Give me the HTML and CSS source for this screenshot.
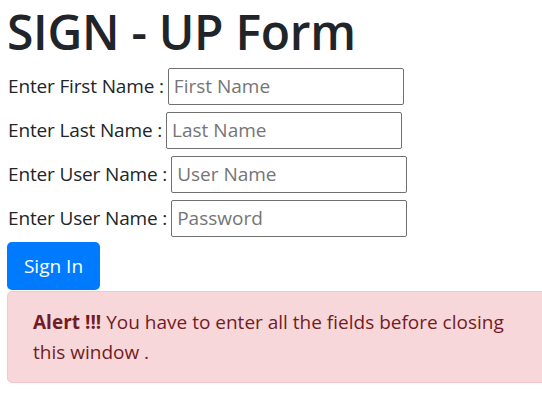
FILE: index.html
```html
<!DOCTYPE html>
<html lang="en">
<head>
<meta charset="utf-8">
<title>SIGN - UP Form</title>
<link rel="stylesheet" href="styles.css">
</head>
<body>
<h1 class="title">SIGN - UP Form</h1>
<form class="signup">
  <div class="row"><label class="label" for="fn">Enter First Name :</label> <input class="field" id="fn" type="text" placeholder="First Name"></div>
  <div class="row"><label class="label" for="ln">Enter Last Name :</label> <input class="field" id="ln" type="text" placeholder="Last Name"></div>
  <div class="row"><label class="label" for="un">Enter User Name :</label> <input class="field" id="un" type="text" placeholder="User Name"></div>
  <div class="row"><label class="label" for="pw">Enter User Name :</label> <input class="field" id="pw" type="password" placeholder="Password"></div>
  <button class="btn" type="button">Sign In</button>
</form>
<div class="alert"><strong>Alert !!!</strong> You have to enter all the fields before closing this window .</div>
</body>
</html>
```
FILE: styles.css
```css
html, body {
  margin: 0;
  overflow: hidden;
  background: #fff;
}
body {
  padding: 0 0 0 7px;
  font-family: "Open Sans", "Noto Sans", sans-serif;
  font-size: 19px;
  color: #212529;
}
.title {
  margin: 0;
  padding-top: 2px;
  font-size: 48px;
  font-weight: 600;
  line-height: 60px;
  letter-spacing: -0.3px;
}
.signup {
  margin-top: 2px;
}
.row {
  height: 44px;
  display: flex;
  align-items: center;
  padding-left: 1px;
}
.label {
  margin-right: 4px;
  letter-spacing: -0.15px;
}
.field {
  box-sizing: border-box;
  width: 236px;
  height: 37px;
  border: 1px solid #707070;
  border-radius: 2px;
  padding: 0 5px;
  font-family: inherit;
  font-size: 19px;
  color: #495057;
}
.field::placeholder {
  color: #757575;
}
.btn {
  display: block;
  margin-top: 2px;
  width: 93px;
  height: 48px;
  border: 0;
  border-radius: 5px;
  background: #007bff;
  color: #fff;
  font-family: inherit;
  font-size: 19px;
}
.alert {
  box-sizing: border-box;
  margin-top: 1px;
  width: 540px;
  padding: 15px 25px;
  background: #f8d7da;
  border: 1px solid #f5c6cb;
  border-radius: 5px;
  color: #721c24;
  line-height: 30px;
}
.alert strong {
  font-weight: 700;
}
```
